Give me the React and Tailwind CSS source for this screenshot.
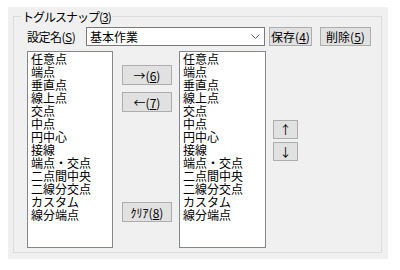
import React from "react";

const items = [
  "任意点",
  "端点",
  "垂直点",
  "線上点",
  "交点",
  "中点",
  "円中心",
  "接線",
  "端点・交点",
  "二点間中央",
  "二線分交点",
  "カスタム",
  "線分端点",
];

function Btn({ className = "", children }) {
  return (
    <div
      className={
        "flex items-center justify-center bg-[#e1e1e1] border border-[#adadad] text-black text-[12px] leading-[13px] " +
        className
      }
    >
      {children}
    </div>
  );
}

function List({ className = "" }) {
  return (
    <div
      className={
        "bg-white border border-[#828790] pl-[3px] h-[197px] text-[12px] leading-[13px] text-black " +
        className
      }
    >
      {items.map((t) => (
        <div key={t} className="h-[13px] whitespace-nowrap">
          {t}
        </div>
      ))}
    </div>
  );
}

export default function App() {
  return (
    <div
      className="w-[400px] h-[270px] bg-white pt-[7px] pl-[8px]"
      style={{ fontFamily: '"Noto Sans CJK JP", "Noto Sans", sans-serif' }}
    >
      <div className="w-[380px] h-[252px] bg-[#f0f0f0] pt-[9px] pl-[5px]">
        <div className="relative w-[369px] h-[237px] border border-[#dcdcdc] pl-[13px] pt-[10px]">
          <span className="absolute left-[7px] top-[-8px] px-[1px] bg-[#f0f0f0] text-[12px] leading-[15px] tracking-[-1px] text-black whitespace-nowrap">
            トグルスナップ(<span className="underline">3</span>)
          </span>

          <div className="flex items-center h-[19px]">
            <div className="w-[59px] text-[12px] leading-[13px] tracking-[-0.5px] text-black whitespace-nowrap">
              設定名(<span className="underline">S</span>)
            </div>
            <div className="flex items-center justify-between w-[179px] h-[19px] bg-white border border-[#7a7a7a] pl-[3px] pr-[3px] text-[12px] leading-[13px] text-black">
              <span>基本作業</span>
              <svg width="9" height="6" viewBox="0 0 9 6" className="mr-[1px]">
                <path d="M0.5 0.5 L4.5 4.5 L8.5 0.5" fill="none" stroke="#606060" strokeWidth="1" />
              </svg>
            </div>
            <Btn className="ml-[4px] w-[43px] h-[19px]">
              保存(<span className="underline">4</span>)
            </Btn>
            <Btn className="ml-[8px] w-[51px] h-[19px]">
              削除(<span className="underline">5</span>)
            </Btn>
          </div>

          <div className="flex mt-[5px]">
            <List className="w-[86px]" />
            <div className="flex flex-col ml-[9px] w-[50px]">
              <Btn className="mt-[14px] h-[20px]">
                →(<span className="underline">6</span>)
              </Btn>
              <Btn className="mt-[7px] h-[20px]">
                ←(<span className="underline">7</span>)
              </Btn>
              <Btn className="mt-[90px] h-[20px]">
                ｸﾘｱ(<span className="underline">8</span>)
              </Btn>
            </div>
            <List className="ml-[7px] w-[87px]" />
            <div className="flex flex-col ml-[7px] w-[25px]">
              <Btn className="mt-[69px] h-[19px]">↑</Btn>
              <Btn className="mt-[3px] h-[19px]">↓</Btn>
            </div>
          </div>
        </div>
      </div>
    </div>
  );
}
